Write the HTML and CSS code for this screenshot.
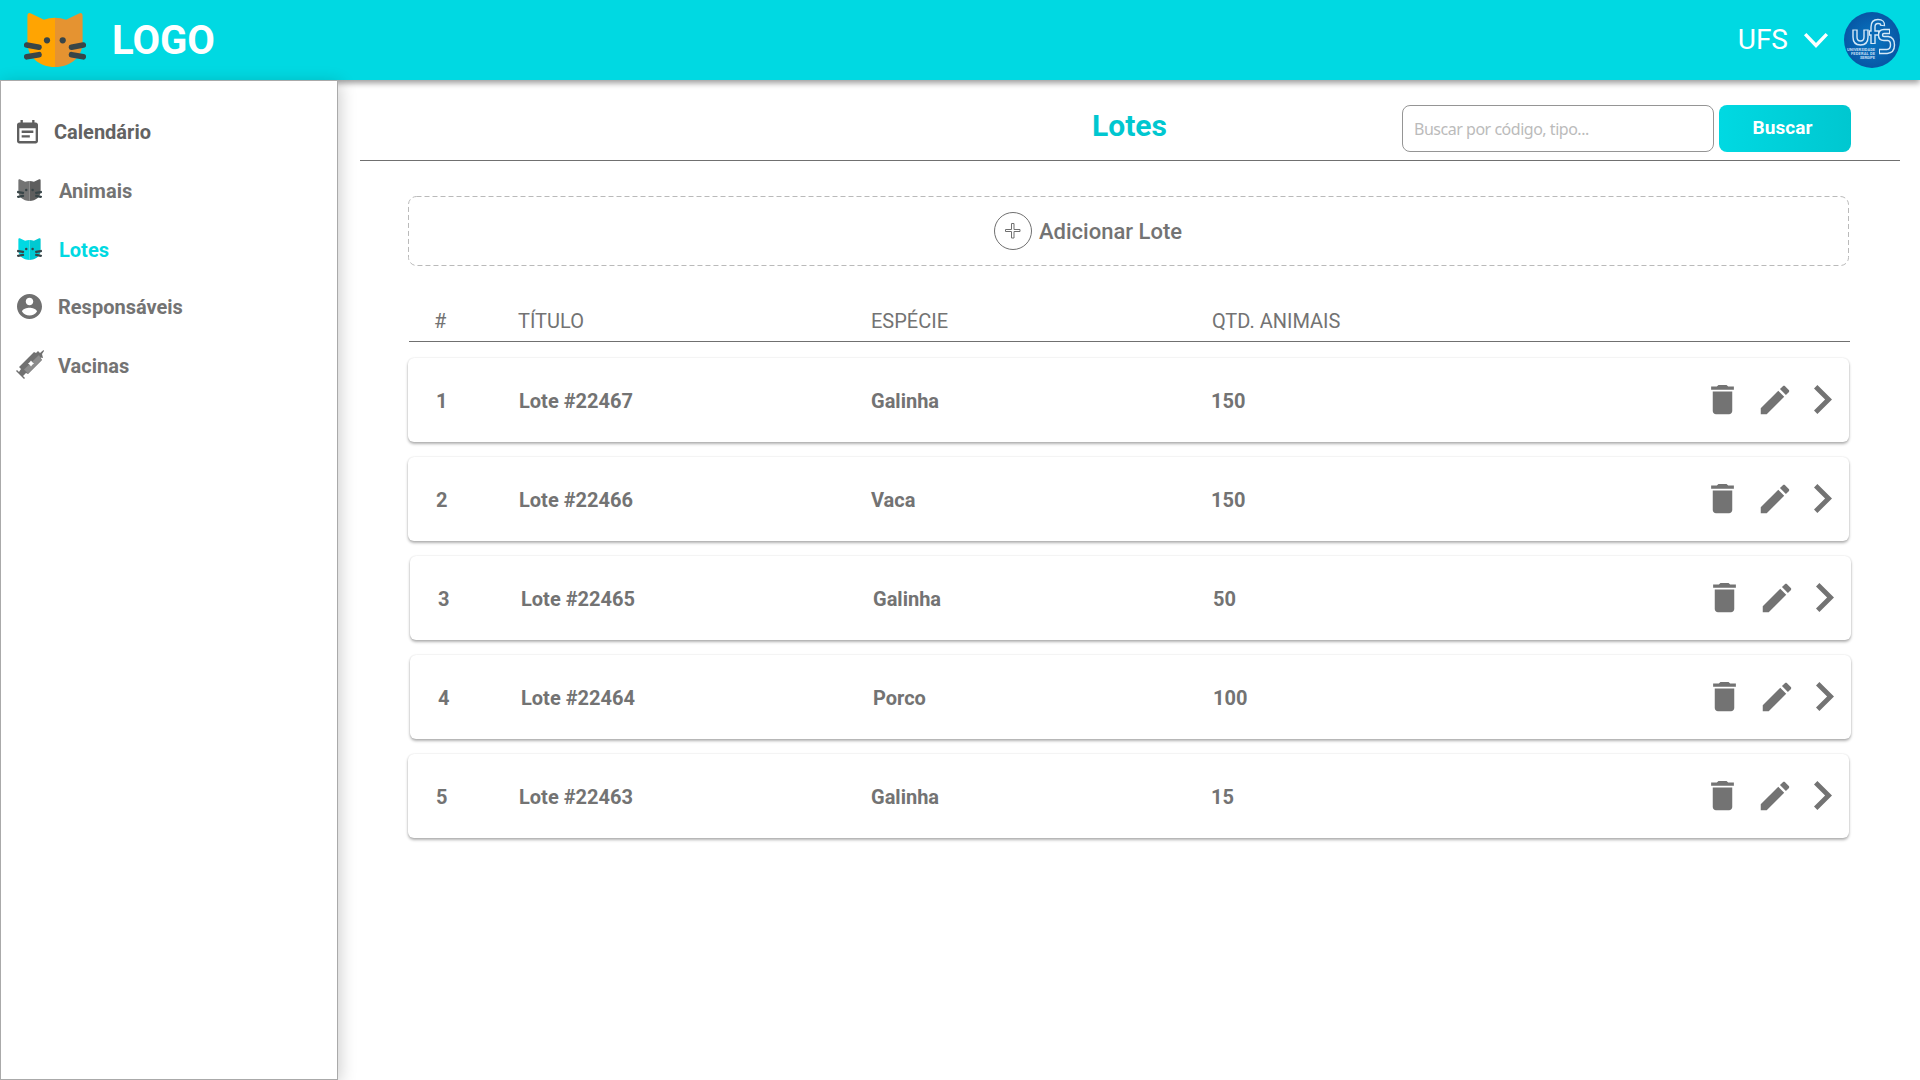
FILE: index.html
```html
<!DOCTYPE html>
<html lang="pt-BR">
<head>
<meta charset="utf-8">
<title>Lotes</title>
<link rel="stylesheet" href="styles.css">
</head>
<body>
<svg class="sprite" aria-hidden="true">
  <symbol id="cat" viewBox="0 0 62 54">
    <path class="cat-left" d="M31 4.7Q25 4.7 20 6.7L7 .4Q3.4-.8 3.4 3V30C4 44 15 54 31 54Z"/>
    <path class="cat-right" d="M31 4.7Q37 4.7 42 6.7L55 .4Q58.600-.8 58.600 3V30C58 44 47 54 31 54Z"/>
    <g class="cat-eyes"><circle cx="23" cy="27.300" r="3.100"/><circle cx="38.700" cy="27.300" r="3.100"/></g>
    <path class="cat-whiskers" d="M2.700 32 15 34.200M2.700 43.800 15 41.700M59.300 32 47.500 34.200M59.300 43.800 47.500 41.700"/>
  </symbol>
  <symbol id="trash" viewBox="0 0 24 24"><path d="M6 19c0 1.100.9 2 2 2h8c1.100 0 2-.9 2-2V7H6v12zM19 4h-3.500l-1-1h-5l-1 1H5v2h14V4z"/></symbol>
  <symbol id="pencil" viewBox="0 0 24 24"><path d="M3 17.250V21h3.750L17.810 9.940l-3.750-3.750L3 17.250zM20.710 7.040c.39-.39.39-1.020 0-1.410l-2.340-2.340c-.39-.39-1.020-.39-1.410 0l-1.830 1.830 3.750 3.750 1.830-1.830z"/></symbol>
  <symbol id="next" viewBox="0 0 18 29"><path d="M0 3.400 3.400 0 18 14.500 3.400 29 0 25.600 11.100 14.500Z"/></symbol>
</svg>

<header class="topbar">
  <div class="brand">
    <svg class="brand-cat cat-orange"><use href="#cat"/></svg>
    <span class="brand-name">LOGO</span>
  </div>
  <div class="account">
    <span class="account-name">UFS</span>
    <svg class="account-arrow" viewBox="0 0 24 15"><path d="M1.200 1.200 12 12.500 22.800 1.200"/></svg>
    <svg class="avatar" viewBox="0 0 56 56">
      <defs><radialGradient id="disc"><stop offset="0" stop-color="#0878c4"/><stop offset="1" stop-color="#0757a5"/></radialGradient></defs>
      <circle cx="28" cy="28" r="28" fill="url(#disc)"/>
      <g class="avatar-outer"><path d="M11 17.500V25Q11 31 16.500 31T22 25V17.500"/><path d="M29 32V15Q29 9.500 34 9.500T38.500 14M25 21H35"/><path d="M46 19.500H40Q36.500 19.500 36.500 23T40 26.500H44Q48.500 27 48.500 33T43 39.500H35"/></g>
      <g class="avatar-inner"><path d="M11 18.500V25Q11 31 16.500 31T22 25V18.500"/><path d="M29 31V15Q29 9.500 34 9.500T38.500 13M26 21H34"/><path d="M45 19.500H40Q36.500 19.500 36.500 23T40 26.500H44Q48.500 27 48.500 33T43 39.500H36"/></g>
      <g class="avatar-text"><text x="3" y="38.500" textLength="28">UNIVERSIDADE</text><text x="7" y="42.500" textLength="24">FEDERAL DE</text><text x="16" y="46.500" textLength="15">SERGIPE</text></g>
    </svg>
  </div>
</header>

<div class="layout">
  <nav class="sidebar">
    <a class="nav-item nav-calendar">
      <svg class="nav-icon icon-calendar" viewBox="3 1 18 20"><path d="M17 10H7v2h10v-2zm2-7h-1V1h-2v2H8V1H6v2H5c-1.110 0-1.990.9-1.990 2L3 19c0 1.100.89 2 2 2h14c1.100 0 2-.9 2-2V5c0-1.100-.9-2-2-2zm0 16H5V8h14v11zm-5-5H7v2h7v-2z"/></svg>
      <span>Calendário</span>
    </a>
    <a class="nav-item nav-animals">
      <svg class="nav-icon icon-cat cat-gray"><use href="#cat"/></svg>
      <span>Animais</span>
    </a>
    <a class="nav-item nav-lots">
      <svg class="nav-icon icon-cat cat-cyan"><use href="#cat"/></svg>
      <span>Lotes</span>
    </a>
    <a class="nav-item nav-people">
      <svg class="nav-icon icon-person" viewBox="2 2 20 20"><path d="M12 2C6.480 2 2 6.480 2 12s4.480 10 10 10 10-4.480 10-10S17.520 2 12 2zm0 3c1.660 0 3 1.340 3 3s-1.340 3-3 3-3-1.340-3-3 1.340-3 3-3zm0 14.200c-2.500 0-4.710-1.280-6-3.220.03-1.990 4-3.080 6-3.080 1.990 0 5.970 1.090 6 3.080-1.290 1.940-3.500 3.220-6 3.220z"/></svg>
      <span>Responsáveis</span>
    </a>
    <a class="nav-item nav-vaccines">
      <svg class="nav-icon icon-syringe" viewBox="0 0 28 29">
        <path class="syringe-dark" d="M27.500 0 28 1 26 4 27 8 24.500 7.500 26 10 12 24 10 23 7 26 9 28 8 29 0 21 1 20 3 22 5 19 3 17 18 2 20 3 22 1 24 3Z"/>
        <path class="syringe-light" d="M23 5 25.500 10 12 23.500 8 19.500Z"/>
        <path class="syringe-mark" d="M15 10.500 16.300 12.200 18 13.500 16.300 14.800 15 16.500 13.700 14.800 12 13.500 13.700 12.200Z"/>
      </svg>
      <span>Vacinas</span>
    </a>
  </nav>

  <main class="content">
    <div class="page-head">
      <h1 class="page-title">Lotes</h1>
      <form class="search">
        <input class="search-input" type="text" placeholder="Buscar por código, tipo...">
        <button class="search-button" type="button">Buscar</button>
      </form>
    </div>

    <section class="lots">
      <button class="add-lot" type="button">
        <svg class="add-outline" viewBox="0 0 1441 70"><rect x=".5" y=".5" width="1440" height="69" rx="8"/></svg>
        <svg class="add-icon" viewBox="0 0 38 38"><circle cx="19" cy="19" r="18.500"/><path d="M17.500 11.500H20V17.500H26V19.500H20V26H17.500V19.500H11.500V17.500H17.500Z"/></svg>
        <span>Adicionar Lote</span>
      </button>

      <div class="columns table-head"><span>#</span><span>TÍTULO</span><span>ESPÉCIE</span><span>QTD. ANIMAIS</span></div>

      <div class="cards">
        <article class="columns card"><span>1</span><span>Lote #22467</span><span>Galinha</span><span>150</span>
          <div class="actions"><svg class="act-trash"><use href="#trash"/></svg><svg class="act-edit"><use href="#pencil"/></svg><svg class="act-next"><use href="#next"/></svg></div></article>
        <article class="columns card"><span>2</span><span>Lote #22466</span><span>Vaca</span><span>150</span>
          <div class="actions"><svg class="act-trash"><use href="#trash"/></svg><svg class="act-edit"><use href="#pencil"/></svg><svg class="act-next"><use href="#next"/></svg></div></article>
        <article class="columns card card-shifted"><span>3</span><span>Lote #22465</span><span>Galinha</span><span>50</span>
          <div class="actions"><svg class="act-trash"><use href="#trash"/></svg><svg class="act-edit"><use href="#pencil"/></svg><svg class="act-next"><use href="#next"/></svg></div></article>
        <article class="columns card card-shifted"><span>4</span><span>Lote #22464</span><span>Porco</span><span>100</span>
          <div class="actions"><svg class="act-trash"><use href="#trash"/></svg><svg class="act-edit"><use href="#pencil"/></svg><svg class="act-next"><use href="#next"/></svg></div></article>
        <article class="columns card"><span>5</span><span>Lote #22463</span><span>Galinha</span><span>15</span>
          <div class="actions"><svg class="act-trash"><use href="#trash"/></svg><svg class="act-edit"><use href="#pencil"/></svg><svg class="act-next"><use href="#next"/></svg></div></article>
      </div>
    </section>
  </main>
</div>
</body>
</html>
```
FILE: styles.css
```css
* { box-sizing: border-box; }
body {
  margin: 0;
  width: 1920px;
  height: 1080px;
  overflow: hidden;
  display: flex;
  flex-direction: column;
  background: #fff;
  color: #737373;
  font-family: Roboto, "Liberation Sans", sans-serif;
}
.sprite { display: none; }
svg { flex: none; overflow: visible; }

/* Top bar */
.topbar {
  height: 80px;
  flex: none;
  display: flex;
  justify-content: space-between;
  padding: 0 20px 0 24px;
  background: #00d9e2;
  box-shadow: 0 3px 6px rgba(0, 0, 0, .4);
}
.brand { display: flex; gap: 26px; }
.brand-cat { width: 62px; height: 54px; margin-top: 13px; }
.brand-name { font-size: 40px; font-weight: 700; line-height: 82px; color: #fff; }
.account { display: flex; align-items: center; }
.account-name { font-size: 28px; line-height: 78px; color: #fff; }
.account-arrow { width: 24px; height: 15px; margin: 0 16px; fill: none; stroke: #fff; stroke-width: 3.4; }
.avatar { width: 56px; height: 56px; }
.avatar-outer { fill: none; stroke: #d4e8f7; stroke-width: 5.4; }
.avatar-inner { fill: none; stroke: #0868b5; stroke-width: 2.6; }
.avatar-text { fill: #c4dff3; font-size: 4px; font-weight: 700; }

/* Cat artwork */
.cat-orange { --left: #ffa402; --right: #e59331; --marks: #384548; }
.cat-gray { --left: #737373; --right: #5e5e5e; --marks: #384548; }
.cat-cyan { --left: #00d9e3; --right: #00c9d2; --marks: #384548; }
.cat-left { fill: var(--left); }
.cat-right { fill: var(--right); }
.cat-eyes { fill: var(--marks); }
.cat-whiskers { fill: none; stroke: var(--marks); stroke-width: 5.6; stroke-linecap: round; }
.icon-cat .cat-whiskers { stroke-width: 4.5; }

/* Sidebar */
.layout { flex: 1; display: flex; }
.sidebar {
  z-index: 1;
  width: 338px;
  flex: none;
  padding-top: 21px;
  border: 1px solid #aaa;
  background: #fff;
  box-shadow: 2px 3px 16px rgba(0, 0, 0, .2);
}
.nav-item {
  height: 59px;
  display: flex;
  align-items: center;
  font-size: 20px;
  font-weight: 700;
  padding-left: 16px;
}
.nav-icon { fill: #707070; }
.nav-calendar { color: #626262; gap: 16px; }
.icon-calendar { width: 21px; height: 23.500px; fill: #5f5f5f; }
.nav-animals, .nav-lots { gap: 17px; }
.nav-lots { color: #00d9e2; height: 60px; }
.icon-cat { width: 25px; height: 22px; margin-bottom: 2px; }
.nav-people { gap: 16px; height: 53px; }
.icon-person { width: 25px; height: 25px; margin-bottom: 1px; }
.nav-vaccines { gap: 14px; padding-left: 15px; height: 66px; }
.icon-syringe { width: 28px; height: 29px; margin-bottom: 4px; }
.syringe-dark { fill: #707070; }
.syringe-light { fill: #8d8d8d; }
.syringe-mark { fill: #fff; }

/* Page heading */
.content { flex: 1; padding: 0 20px 0 22px; }
.page-head {
  height: 81px;
  display: flex;
  align-items: flex-start;
  border-bottom: 1px solid #707070;
}
.page-title {
  margin: 0 0 0 732px;
  width: 310px;
  font-size: 30px;
  font-weight: 700;
  line-height: 91px;
  color: #00c7d0;
}
.search { display: flex; gap: 5px; padding-top: 25px; }
.search-input {
  width: 312px;
  height: 47px;
  padding: 0 11px;
  border: 1px solid #959595;
  border-radius: 8px;
  font: 16px "Noto Sans", sans-serif;
  letter-spacing: -.48px;
  background: #fff;
}
.search-input::placeholder { color: #bbb; }
.search-button {
  width: 132px;
  height: 47px;
  padding: 0 5px 2px 0;
  border: 0;
  border-radius: 8px;
  background: linear-gradient(90deg, #00d9e2, #00c7d0);
  color: #fff;
  font: 700 19px Roboto, sans-serif;
  letter-spacing: .1px;
}

/* Lots list */
.lots { padding: 35px 0 0 48px; }
.add-lot {
  position: relative;
  width: 1441px;
  height: 70px;
  display: flex;
  align-items: center;
  gap: 7px;
  padding: 0 0 0 586px;
  border: 0;
  border-radius: 8px;
  background: #fff;
  color: #737373;
  font: 500 22px Roboto, sans-serif;
}
.add-outline {
  position: absolute;
  inset: 0;
  width: 1441px;
  height: 70px;
  fill: none;
  stroke: #bababa;
  stroke-dasharray: 5 3;
}
.add-icon { width: 38px; height: 38px; fill: none; stroke: #707070; stroke-width: 1; }
.columns {
  width: 1441px;
  display: grid;
  grid-template-columns: 83px 352px 340px 380px 1fr;
  padding-left: 28px;
  align-items: center;
  font-size: 20px;
}
.table-head {
  grid-template-columns: 84px 353px 341px 1fr;
  height: 76px;
  padding-top: 35px;
  margin-left: 1px;
  padding-left: 25px;
  border-bottom: 1px solid #707070;
}
.cards { display: grid; gap: 15px; padding-top: 16px; }
.card {
  height: 84px;
  border-radius: 6px;
  background: #fff;
  box-shadow: 0 2px 3px rgba(0, 0, 0, .3), 0 0 2px rgba(0, 0, 0, .12);
  font-weight: 700;
}
.card > span { padding-top: 2px; }
.card-shifted { margin-left: 2px; }
.actions { display: flex; align-items: center; padding-bottom: 1px; fill: #737373; }
.act-trash { width: 39px; height: 39px; margin-left: 112px; }
.act-edit { width: 38px; height: 38px; margin-left: 14px; }
.act-next { width: 18px; height: 29px; margin-left: 20px; }
```
